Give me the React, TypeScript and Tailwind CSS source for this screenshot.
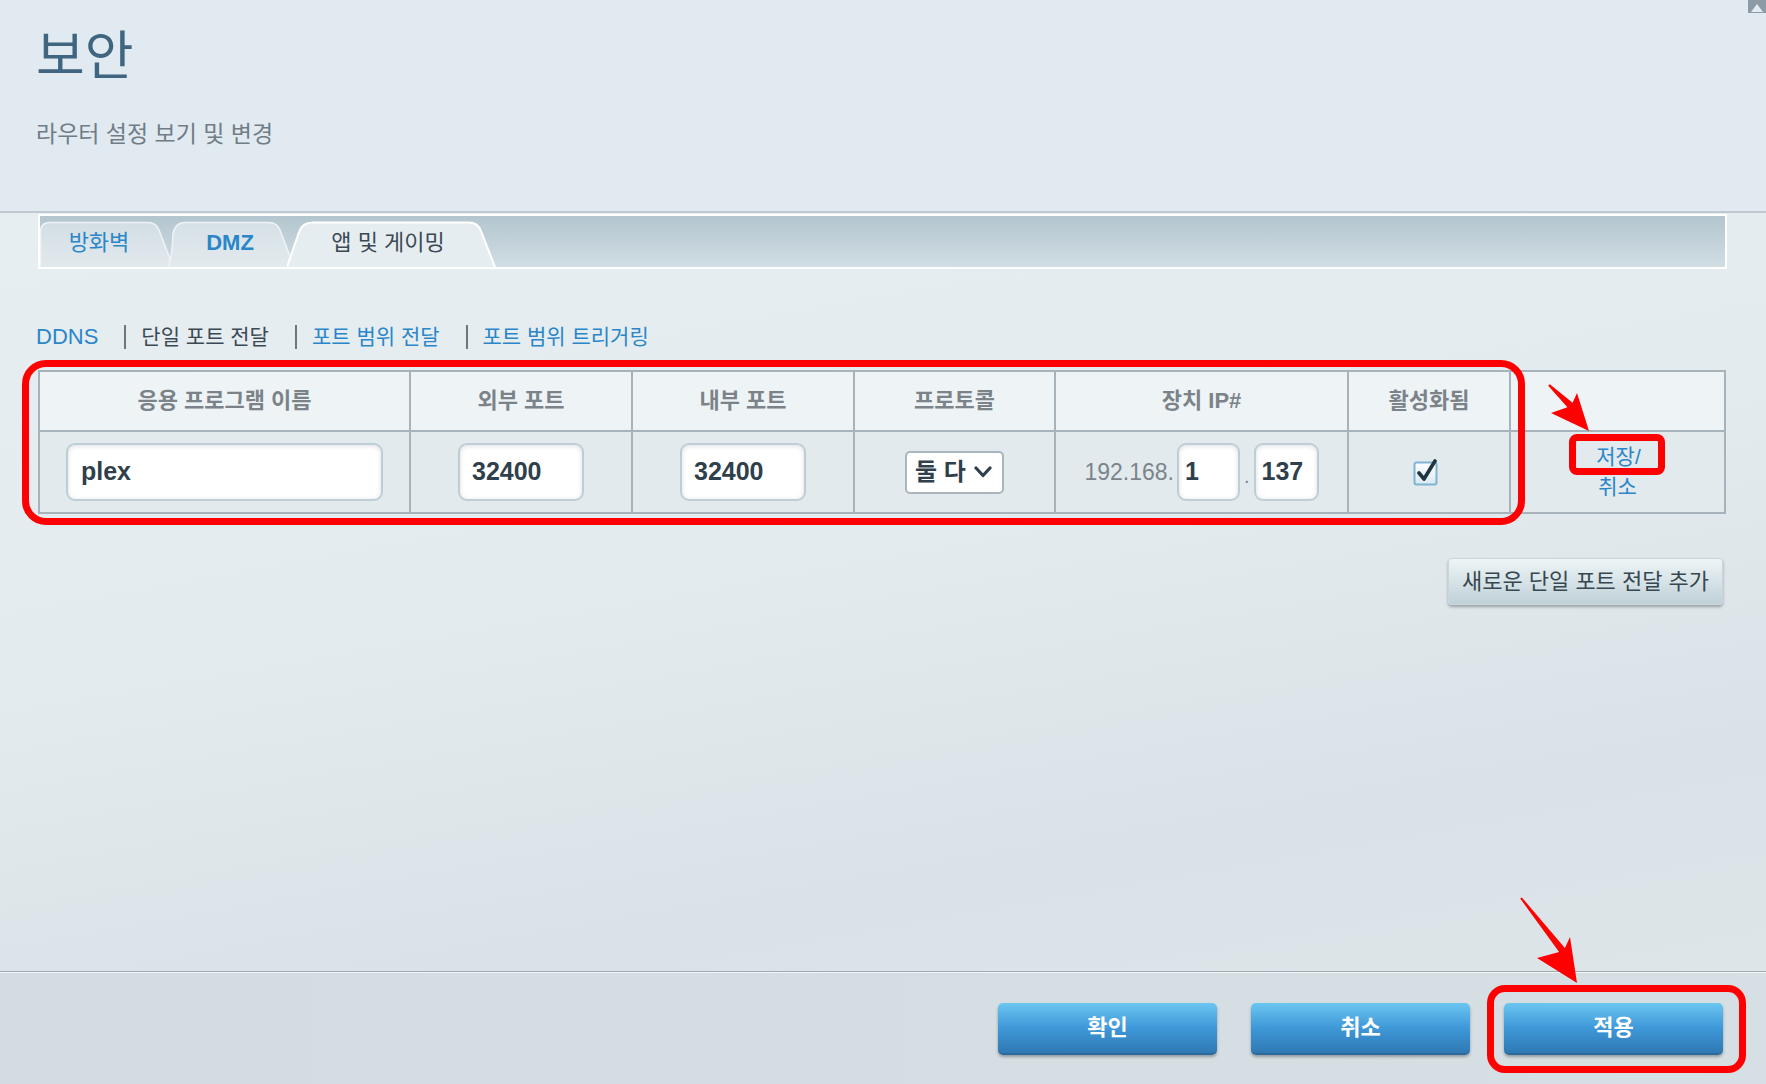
import React from "react";

// ── Small pieces ──────────────────────────────────────────────
function Field({ value, className }: { value: string; className?: string }) {
  return (
    <div
      className={
        "flex h-[58px] items-center rounded-[9px] border-2 border-[#bfcdd4] bg-white text-[25px] font-bold text-[#2f3f4b] shadow-[inset_0_1px_5px_rgba(60,80,90,0.18)] " +
        (className ?? "")
      }
    >
      {value}
    </div>
  );
}

function BlueButton({ label }: { label: string }) {
  return (
    <button className="h-[52px] w-[219px] rounded-[5px] border-b-2 border-[#2a6a9c] bg-linear-to-b from-[#6cc6f1] via-[#3e98d8] to-[#2f79b3] text-[22px] font-bold text-white shadow-[0_2px_3px_rgba(0,0,0,0.3)]">
      {label}
    </button>
  );
}

function Sep() {
  return <span className="ml-[26px] mr-[15px] h-[24px] w-[2px] bg-[#6c767d]" />;
}

const TH = "border-2 border-[#a6b3bb] pb-[2px] text-center text-[22px] font-bold text-[#7b8389]";
const TD = "border-2 border-[#a6b3bb]";

// ── Page ──────────────────────────────────────────────────────
export default function App() {
  return (
    <div className="relative flex h-[1084px] w-[1766px] flex-col overflow-hidden font-['Liberation_Sans','Noto_Sans_CJK_KR',sans-serif]">
      {/* header */}
      <header className="h-[211px] bg-[#e0eaf0] pl-[36px] pt-[26px]">
        <h1 className="text-[53px] leading-[62px] text-[#3f6580]">보안</h1>
        <p className="mt-[31px] text-[23px] leading-[30px] text-[#707c86]">라우터 설정 보기 및 변경</p>
      </header>
      <div className="h-[2px] bg-[#bfc9cf]" />

      {/* content */}
      <main className="flex-1 bg-[linear-gradient(170deg,#e7eef2_0%,#e4ebef_45%,#d9e2e7_78%,#dde5e9_100%)] pl-[38px]">
        {/* tabs */}
        <div className="mt-px flex h-[55px] w-[1689px] items-end border-2 border-white bg-linear-to-b from-[#b3c5ce] to-[#d1dee4]">
          <div className="relative h-[46px] w-[134px]">
            <svg className="absolute inset-0" width="134" height="46" viewBox="0 0 134 46">
              <defs>
                <linearGradient id="t1" x1="0" y1="0" x2="0" y2="1">
                  <stop offset="0" stopColor="#d2dee4" />
                  <stop offset="1" stopColor="#e2e9ed" />
                </linearGradient>
              </defs>
              <path d="M0.5 46 V11 Q0.5 1.5 10 1.5 H108 Q116 1.5 119 9 L133 46 Z" fill="url(#t1)" />
              <path d="M0.5 46 V11 Q0.5 1.5 10 1.5 H108 Q116 1.5 119 9 L133 46" fill="none" stroke="#eef3f6" strokeWidth="1.5" />
            </svg>
            <span className="relative flex h-full w-[118px] items-center justify-center pb-[4px] text-[22px] text-[#2a86c8]">방화벽</span>
          </div>
          <div className="relative -ml-[7px] h-[46px] w-[128px]">
            <svg className="absolute inset-0" width="128" height="46" viewBox="0 0 128 46">
              <defs>
                <linearGradient id="t2" x1="0" y1="0" x2="0" y2="1">
                  <stop offset="0" stopColor="#d5e0e6" />
                  <stop offset="1" stopColor="#e3eaee" />
                </linearGradient>
              </defs>
              <path d="M1 46 Q5 38 6 13 Q8 1.5 18 1.5 H102 Q110 1.5 113 9 L127 46 Z" fill="url(#t2)" />
              <path d="M1 46 Q5 38 6 13 Q8 1.5 18 1.5 H102 Q110 1.5 113 9 L127 46" fill="none" stroke="#eef3f6" strokeWidth="1.5" />
            </svg>
            <span className="relative flex h-full w-[126px] items-center justify-center pb-[4px] text-[22px] font-bold text-[#2a86c8]">DMZ</span>
          </div>
          <div className="relative -ml-[8px] h-[46px] w-[209px]">
            <svg className="absolute inset-0" width="209" height="46" viewBox="0 0 209 46">
              <path d="M0 46 L12 11 Q15 1.5 26 1.5 H182 Q191 1.5 194 10 L208 46 Z" fill="#e6edf1" />
              <path d="M0 46 L12 11 Q15 1.5 26 1.5 H182 Q191 1.5 194 10 L208 46" fill="none" stroke="#ffffff" strokeWidth="2" />
            </svg>
            <span className="relative flex h-full w-[202px] items-center justify-center pb-[4px] text-[22px] text-[#3b4954]">앱 및 게이밍</span>
          </div>
        </div>

        {/* sub nav */}
        <nav className="-ml-[2px] mt-[53px] flex h-[30px] items-center text-[21px] leading-[30px]">
          <span className="text-[22px] text-[#2a86c8]">DDNS</span>
          <Sep />
          <span className="text-[#3b4954]">단일 포트 전달</span>
          <Sep />
          <span className="text-[#2a86c8]">포트 범위 전달</span>
          <Sep />
          <span className="text-[#2a86c8]">포트 범위 트리거링</span>
        </nav>

        {/* table */}
        <table className="mt-[18px] w-[1686px] table-fixed border-collapse">
          <colgroup>
            <col className="w-[371px]" />
            <col className="w-[222px]" />
            <col className="w-[222px]" />
            <col className="w-[201px]" />
            <col className="w-[293px]" />
            <col className="w-[162px]" />
            <col className="w-[215px]" />
          </colgroup>
          <thead>
            <tr className="h-[60px] bg-[#eef3f6]">
              <th className={TH}>응용 프로그램 이름</th>
              <th className={TH}>외부 포트</th>
              <th className={TH}>내부 포트</th>
              <th className={TH}>프로토콜</th>
              <th className={TH}>장치 IP#</th>
              <th className={TH}>활성화됨</th>
              <th className={TH}></th>
            </tr>
          </thead>
          <tbody>
            <tr className="h-[82px] bg-[#e3eaee]">
              <td className={TD}>
                <div className="flex justify-center">
                  <Field value="plex" className="w-[317px] pl-[13px]" />
                </div>
              </td>
              <td className={TD}>
                <div className="flex justify-center">
                  <Field value="32400" className="w-[126px] pl-[12px]" />
                </div>
              </td>
              <td className={TD}>
                <div className="flex justify-center">
                  <Field value="32400" className="w-[126px] pl-[12px]" />
                </div>
              </td>
              <td className={TD}>
                <div className="flex justify-center">
                  <div className="flex h-[43px] w-[99px] items-center rounded-[5px] border-2 border-[#aab6bd] bg-white pl-[8px] text-[24px] font-bold text-[#2f3f4b]">
                    <span>둘 다</span>
                    <svg className="ml-[8px]" width="18" height="12" viewBox="0 0 18 12">
                      <path d="M2 2 L9 9.5 L16 2" fill="none" stroke="#2f3f4b" strokeWidth="3.2" strokeLinecap="round" strokeLinejoin="round" />
                    </svg>
                  </div>
                </div>
              </td>
              <td className={TD}>
                <div className="flex items-center justify-center">
                  <span className="text-[23px] text-[#7b848a]">192.168.</span>
                  <Field value="1" className="ml-[3px] w-[63px] pl-[6px]" />
                  <span className="mx-[4px] self-end pb-[10px] text-[20px] text-[#7b848a]">.</span>
                  <Field value="137" className="w-[65px] pl-[6px]" />
                </div>
              </td>
              <td className={TD}>
                <div className="flex justify-center pr-[6px]">
                  <svg width="27" height="27" viewBox="0 0 27 27">
                    <defs>
                      <linearGradient id="cb" x1="0" y1="0" x2="0" y2="1">
                        <stop offset="0" stopColor="#ffffff" />
                        <stop offset="1" stopColor="#d9e8f0" />
                      </linearGradient>
                    </defs>
                    <rect x="1.5" y="3.5" width="22" height="22" rx="2" fill="url(#cb)" stroke="#7fb3d3" strokeWidth="2" />
                    <path d="M6 14 L11 20 L22 2" fill="none" stroke="#1f3340" strokeWidth="3.6" strokeLinecap="round" strokeLinejoin="round" />
                  </svg>
                </div>
              </td>
              <td className={TD}>
                <div className="flex flex-col items-center text-[21px] leading-[30px] text-[#2a86c8]">
                  <span className="pl-[2px]">저장/</span>
                  <span>취소</span>
                </div>
              </td>
            </tr>
          </tbody>
        </table>

        <div className="mt-[44px] flex w-[1685px] justify-end">
          <button className="h-[47px] w-[275px] rounded-[4px] border border-[#c9d7dd] bg-linear-to-b from-[#eef5f7] to-[#bfd1d8] text-[22px] text-[#37474f] shadow-[0_2px_3px_rgba(0,0,0,0.3)]">
            새로운 단일 포트 전달 추가
          </button>
        </div>
      </main>

      {/* footer */}
      <div className="h-px bg-[#9eabb3]" />
      <div className="h-px bg-[#f3f6f8]" />
      <footer className="flex h-[111px] items-center justify-end gap-[34px] bg-linear-to-r from-[#d2dce1] to-[#d6dfe4] pr-[43px]">
        <BlueButton label="확인" />
        <BlueButton label="취소" />
        <BlueButton label="적용" />
      </footer>

      {/* corner icon */}
      <svg className="absolute right-0 top-0" width="18" height="13" viewBox="0 0 18 13">
        <rect x="0" y="0" width="18" height="13" fill="#8c9ba6" />
        <path d="M3 12 L9 4 L15 12 Z" fill="#e4ebef" />
      </svg>

      {/* red annotations */}
      <div className="pointer-events-none absolute left-[22px] top-[360px] h-[165px] w-[1503px] rounded-[24px] border-[7px] border-[#ff0000]" />
      <div className="pointer-events-none absolute left-[1569px] top-[434px] h-[41px] w-[96px] rounded-[8px] border-[7px] border-[#ff0000]" />
      <div className="pointer-events-none absolute left-[1487px] top-[985px] h-[88px] w-[259px] rounded-[18px] border-[7px] border-[#ff0000]" />
      <svg className="pointer-events-none absolute inset-0" width="1766" height="1084" viewBox="0 0 1766 1084">
        <polygon
          points="1549.8,384.3 1572.6,402.7 1577,393 1589,431 1551,413 1567.4,407.3 1548.2,385.7"
          fill="#ff0000"
        />
        <polygon
          points="1521.8,897.4 1564.9,948.1 1570,937 1577,983 1537,958 1559.1,951.9 1520.2,898.6"
          fill="#ff0000"
        />
      </svg>
    </div>
  );
}
